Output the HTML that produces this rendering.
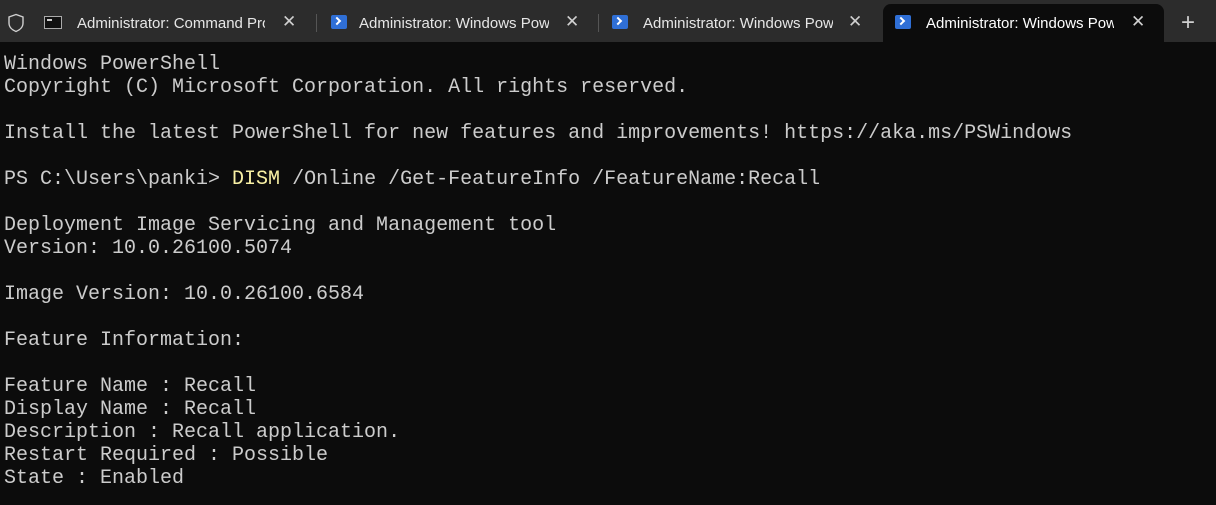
<!DOCTYPE html>
<html><head><style>
body{margin:0;width:1216px;height:505px;background:#0c0c0c;overflow:hidden;font-family:"Liberation Sans",sans-serif}
.bar{position:absolute;left:0;top:0;width:1216px;height:42px;background:#2c2c2c}
.t{position:absolute;top:15px;font-size:15px;color:#e6e6e6;white-space:nowrap;overflow:hidden}
.x{position:absolute;top:12px;font-size:17px;color:#d0d0d0}
.ps{position:absolute;top:15px;width:16px;height:14px;background:#2f6fd6;border-radius:2px}
.ps:after{content:"";position:absolute;left:3px;top:3px;width:4px;height:4px;border-right:2px solid #fff;border-bottom:2px solid #fff;transform:rotate(-45deg)}
.sep{position:absolute;top:14px;width:1px;height:18px;background:#555}
.act{position:absolute;left:883px;top:4px;width:281px;height:38px;background:#0c0c0c;border-radius:8px 8px 0 0}
pre{position:absolute;left:4px;top:53px;margin:0;font-family:"Liberation Mono",monospace;font-size:20px;line-height:23px;color:#cccccc}
.y{color:#f9f1a5}
</style></head><body>
<div class="bar"></div>
<div class="act"></div>
<svg style="position:absolute;left:7px;top:13px" width="18" height="20" viewBox="0 0 18 20"><path d="M9 1.5L2 4v6c0 4 3 7 7 8.5c4-1.5 7-4.5 7-8.5V4z" fill="none" stroke="#cfcfcf" stroke-width="1.4"/></svg>
<div style="position:absolute;left:44px;top:16px;width:18px;height:13px;background:#111;border:1px solid #aaa;box-sizing:border-box"><div style="position:absolute;left:2px;top:2px;width:5px;height:2px;background:#ccc"></div></div>
<div class="t" style="left:77px;width:188px">Administrator: Command Prompt</div><div class="x" style="left:282px">✕</div>
<div class="sep" style="left:316px"></div>
<div class="ps" style="left:331px"></div>
<div class="t" style="left:359px;width:190px">Administrator: Windows PowerShell</div><div class="x" style="left:565px">✕</div>
<div class="sep" style="left:598px"></div>
<div class="ps" style="left:612px"></div>
<div class="t" style="left:643px;width:190px">Administrator: Windows PowerShell</div><div class="x" style="left:848px">✕</div>
<div class="ps" style="left:895px"></div>
<div class="t" style="left:926px;width:188px;color:#fff">Administrator: Windows PowerShell</div><div class="x" style="left:1131px">✕</div>
<div style="position:absolute;left:1181px;top:9px;font-size:24px;color:#d0d0d0">+</div>
<pre>Windows PowerShell
Copyright (C) Microsoft Corporation. All rights reserved.

Install the latest PowerShell for new features and improvements! https://aka.ms/PSWindows

PS C:\Users\panki> <span class="y">DISM</span> /Online /Get-FeatureInfo /FeatureName:Recall

Deployment Image Servicing and Management tool
Version: 10.0.26100.5074

Image Version: 10.0.26100.6584

Feature Information:

Feature Name : Recall
Display Name : Recall
Description : Recall application.
Restart Required : Possible
State : Enabled</pre>
</body></html>
